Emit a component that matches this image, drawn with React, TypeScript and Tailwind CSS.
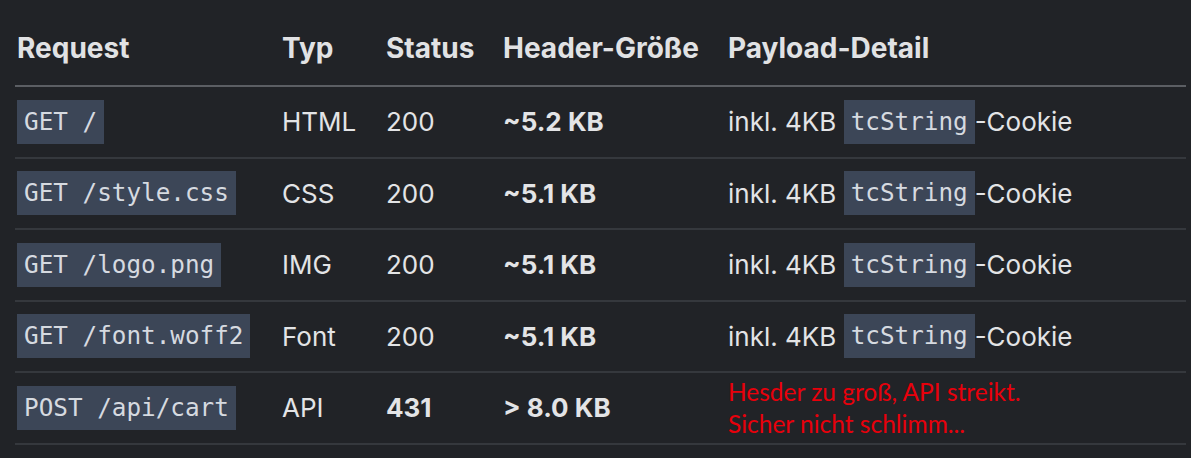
import React from "react";

const mono = "font-['DejaVu_Sans_Mono',monospace]";

function Code({ children }: { children: React.ReactNode }) {
  return (
    <span
      className={`${mono} inline-block bg-[#3c4657] text-[#d6dae0] text-[24.3px] leading-[30px] px-[7px] py-[7px]`}
    >
      {children}
    </span>
  );
}

type Row = {
  req: string;
  typ: string;
  status: string;
  bold?: boolean;
  size: string;
  warn?: boolean;
};

const rows: Row[] = [
  { req: "GET /", typ: "HTML", status: "200", size: "~5.2 KB" },
  { req: "GET /style.css", typ: "CSS", status: "200", size: "~5.1 KB" },
  { req: "GET /logo.png", typ: "IMG", status: "200", size: "~5.1 KB" },
  { req: "GET /font.woff2", typ: "Font", status: "200", size: "~5.1 KB" },
  { req: "POST /api/cart", typ: "API", status: "431", bold: true, size: "> 8.0 KB", warn: true },
];

const grid = "grid grid-cols-[265px_104px_117px_225px_1fr] items-center";
const boldFont = "font-bold";

export default function App() {
  return (
    <div className="w-[1191px] h-[458px] bg-[#212327] overflow-hidden font-['Inter',sans-serif] text-[#e3e4e6]">
      <div className="ml-[15px] w-[1171px]">
        <div className={`${grid} ${boldFont} h-[87px] border-b-2 border-[#5b5e63] pt-[11px] text-[28px] text-[#e1e2e4]`}>
          <div className="pl-[2px]">Request</div>
          <div className="pl-[2px]">Typ</div>
          <div className="pl-[2px]">Status</div>
          <div className="pl-[2px]">Header-Größe</div>
          <div className="pl-[2px]">Payload-Detail</div>
        </div>
        {rows.map((r) => (
          <div key={r.req} className={`${grid} h-[71.5px] border-b-2 border-[#35383d] text-[26px]`}>
            <div className="pl-[2px]">
              <Code>{r.req}</Code>
            </div>
            <div className="pl-[2px]">{r.typ}</div>
            <div className={`pl-[2px] ${r.bold ? boldFont : ""}`}>{r.status}</div>
            <div className={`pl-[2px] ${boldFont}`}>{r.size}</div>
            <div className="pl-[2px]">
              {r.warn ? (
                <div className="font-['Lato',sans-serif] text-[#e8000b] text-[24.5px] leading-[32px]">
                  <div>Hesder zu groß, API streikt.</div>
                  <div>Sicher nicht schlimm...</div>
                </div>
              ) : (
                <div className="flex items-center">
                  <span>inkl. 4KB&nbsp;</span>
                  <Code>tcString</Code>
                  <span>-Cookie</span>
                </div>
              )}
            </div>
          </div>
        ))}
      </div>
    </div>
  );
}
